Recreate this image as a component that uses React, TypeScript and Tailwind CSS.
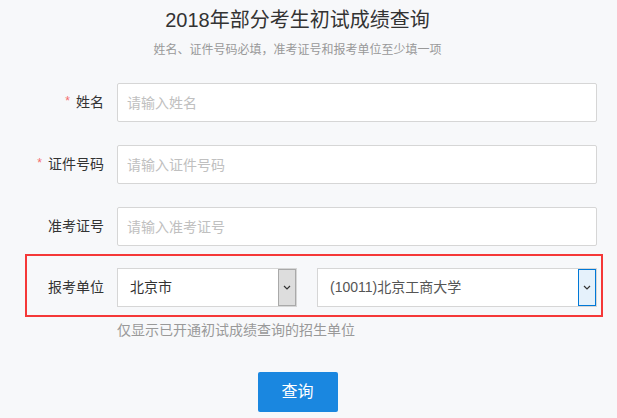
import React from 'react';

const font = { fontFamily: '"Liberation Sans", "Noto Sans CJK SC", sans-serif' };

const Chevron: React.FC = () => (
  <svg width="8" height="5" viewBox="0 0 8 5" fill="none">
    <path d="M1 1l3 3 3-3" stroke="#333" strokeWidth="1.2" />
  </svg>
);

const Field: React.FC<{ label: string; placeholder: string; required?: boolean }> = ({ label, placeholder, required }) => (
  <div className="flex items-center h-[39px]">
    <div className="w-[117px] pr-[13px] flex justify-end items-center text-[14px] text-[#333]">
      {required && <span className="text-[#f56c6c] text-[12px] mr-[6px] -mt-[3px]">*</span>}
      <span>{label}</span>
    </div>
    <input
      placeholder={placeholder}
      className="w-[480px] h-[39px] bg-white border border-[#d6d6d6] rounded-[2px] pl-[9px] text-[14px] text-[#333] placeholder:text-[#c0c0c0] outline-none"
      style={font}
    />
  </div>
);

export default function App() {
  return (
    <div className="w-[617px] h-[418px] bg-[#f7f8fa] overflow-hidden" style={font}>
      <div className="w-[595px] text-center">
        <h1 className="pt-[6px] text-[20px] leading-[28px] text-[#333] font-normal">2018年部分考生初试成绩查询</h1>
        <p className="mt-[8px] text-[12px] leading-[16px] text-[#999]">姓名、证件号码必填，准考证号和报考单位至少填一项</p>
      </div>

      <div className="mt-[25px] flex flex-col gap-[23px]">
        <Field label="姓名" placeholder="请输入姓名" required />
        <Field label="证件号码" placeholder="请输入证件号码" required />
        <Field label="准考证号" placeholder="请输入准考证号" />
      </div>

      <div className="mt-[8px] ml-[25px] w-[578px] h-[63px] border-2 border-[#f53838] flex items-center pt-[3px]">
        <div className="w-[90px] pr-[13px] text-right text-[14px] text-[#333]">报考单位</div>
        <div className="w-[180px] h-[39px] bg-white border border-[#d6d6d6] flex items-center">
          <span className="flex-1 pl-[12px] text-[14px] text-[#333]">北京市</span>
          <div className="w-[18px] h-full bg-[#dddddd] border border-[#a9a9a9] flex items-center justify-center">
            <Chevron />
          </div>
        </div>
        <div className="ml-[20px] w-[280px] h-[39px] bg-white border border-[#d6d6d6] flex items-center">
          <span className="flex-1 pl-[12px] text-[14px] text-[#555]">(10011)北京工商大学</span>
          <div className="w-[18px] h-full bg-[#e5f1fb] border border-[#0078d7] flex items-center justify-center">
            <Chevron />
          </div>
        </div>
      </div>

      <p className="mt-[3px] ml-[117px] text-[14px] leading-[20px] text-[#999]">仅显示已开通初试成绩查询的招生单位</p>

      <div className="w-[595px] flex justify-center mt-[32px]">
        <button className="w-[80px] h-[40px] bg-[#1a87e0] rounded-[2px] text-white text-[16px]" style={font}>查询</button>
      </div>
    </div>
  );
}
